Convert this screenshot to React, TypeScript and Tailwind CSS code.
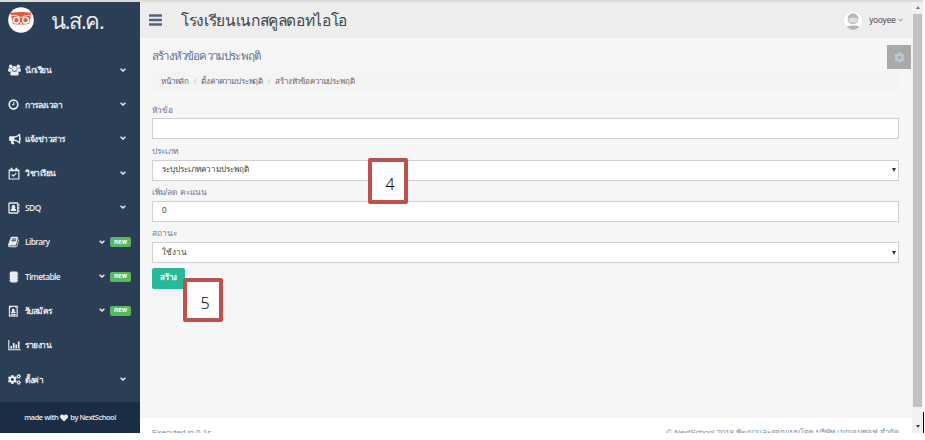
import type { ReactNode } from "react";
import { FaBullhorn, FaCogs, FaCog, FaHeart } from "react-icons/fa";

function UsersIcon() {
  return (
    <svg viewBox="0 0 13 12" className="h-3 w-[13px]" fill="currentColor">
      <circle cx="2.7" cy="2.4" r="1.8" />
      <circle cx="10.3" cy="2.4" r="1.8" />
      <path d="M.2 7.300V5.600q0-1.500 1-1.500 1.500 1 3 .2-.4 1.600.4 2.500-1 .2-1.500.9H.8q-.6 0-.6-.4zM12.800 7.300V5.600q0-1.500-1-1.500-1.500 1-3 .2.400 1.600-.4 2.500 1 .2 1.500.9h2.300q.6 0 .6-.4z" />
      <circle cx="6.500" cy="4.500" r="2.400" />
      <path d="M2.300 10.200q0-3.200 2-3.200 2.200 1.500 4.400 0 2 0 2 3.200 0 1.400-1.400 1.400H3.700q-1.400 0-1.400-1.400z" />
    </svg>
  );
}
function ClockIcon() {
  return (
    <svg viewBox="0 0 12 12" className="-ml-[2px] h-[11px] w-[11px]" fill="none" stroke="currentColor">
      <circle cx="6" cy="6" r="4.7" strokeWidth="1.8" />
      <path d="M6.3 3.2v3.2H4.2" strokeWidth="1.1" />
    </svg>
  );
}
function CalendarIcon() {
  return (
    <svg viewBox="0 0 12 13" className="-ml-px h-[13px] w-[12px]" fill="none" stroke="currentColor">
      <path d="M1.2 3h9.6v9H1.2zM1.2 3.6h9.6" strokeWidth="1.2" />
      <path d="M3.6.8v2.6M8.4.8v2.6" strokeWidth="1.8" />
      <path d="M3.8 7.5l1.6 1.7 2.9-3" strokeWidth="1.1" />
    </svg>
  );
}
function AddressIcon() {
  return (
    <svg viewBox="0 0 12 12" className="-ml-px h-3 w-3" fill="none" stroke="currentColor">
      <rect x="1" y="1" width="8.8" height="10" rx=".6" strokeWidth="1.3" />
      <path d="M11 2v2M11 5v2M11 8v2" strokeWidth="1" />
      <path d="M2.700 9V7.400l1.300-1A1.900 2.100 0 1 1 6.900 6.400l1.300 1V9z" fill="currentColor" stroke="none" />
    </svg>
  );
}
function BookIcon() {
  return (
    <svg viewBox="0 0 1792 1792" className="-ml-px h-3 w-3" fill="currentColor">
      <path d="M1639 478q40 57 18 129l-275 906q-19 64-76.5 107.5t-122.5 43.5h-923q-77 0-148.5-53.5t-99.5-131.5q-24-67-2-127 0-4 3-27t4-37q1-8-3-21.5t-3-19.5q2-11 8-21t16.5-23.5 16.5-23.5q23-38 45-91.5t30-91.5q3-10 .5-30t-.5-28q3-11 17-28t17-23q21-36 42-92t25-90q1-9-2.5-32t.5-28q4-13 22-30.5t22-22.5q19-26 42.5-84.5t27.5-96.5q1-8-3-25.5t-2-26.5q2-8 9-18t18-23 17-21q8-12 16.5-30.5t15-35 16-36 19.5-32 26.5-23.5 36-11.5 47.5 5.5l-1 3q38-9 51-9h761q74 0 114 56t18 130l-274 906q-36 119-71.5 153.5t-128.5 34.5h-869q-27 0-38 15-11 16-1 43 24 70 144 70h923q29 0 56-15.5t35-41.5l300-987q7-22 5-57 38 15 59 43zm-1064 2q-4 13 2 22.5t20 9.5h608q13 0 25.5-9.5t16.5-22.5l21-64q4-13-2-22.5t-20-9.5h-608q-13 0-25.5 9.5t-16.5 22.5zm-83 256q-4 13 2 22.5t20 9.5h608q13 0 25.5-9.5t16.5-22.5l21-64q4-13-2-22.5t-20-9.5h-608q-13 0-25.5 9.5t-16.5 22.5z" />
    </svg>
  );
}
function NotebookIcon() {
  return (
    <svg viewBox="0 0 12 12" className="-ml-[2px] h-3 w-3" fill="currentColor">
      <rect x="2" y=".6" width="7.6" height="10.8" rx="1.4" />
      <path d="M.8 2.5h9.8M.8 4.8h9.8M.8 7.1h9.8M.8 9.4h9.8" stroke="currentColor" strokeWidth=".9" opacity=".5" />
    </svg>
  );
}
function BadgeIcon() {
  return (
    <svg viewBox="0 0 12 13" className="-ml-[2px] h-[12px] w-[11px]" fill="none" stroke="currentColor">
      <rect x="1.6" y="1.4" width="8.4" height="10.6" strokeWidth="1.3" />
      <path d="M1.6 2h2.5M7.6 2H10M3.4 10.4h5" strokeWidth="1.2" />
      <path d="M3.3 9V7.7l1.2-.9a1.6 1.8 0 1 1 2.5 0l1.3.9V9z" fill="currentColor" stroke="none" />
    </svg>
  );
}
function ChartIcon() {
  return (
    <svg viewBox="0 0 13 12" className="h-3 w-[13px]" fill="none" stroke="currentColor">
      <path d="M.8 1v9.8h12" strokeWidth="1.1" />
      <path d="M3.2 9.5V7M5.7 9.5V4M8.2 9.5V5.4M10.7 9.5V2.5" strokeWidth="1.7" />
    </svg>
  );
}
function Chevron() {
  return (
    <svg viewBox="0 0 6 4" className="mb-px h-1 w-1.5" fill="none" stroke="currentColor" strokeWidth="1.5">
      <path d="M.6.7L3 3 5.4.7" />
    </svg>
  );
}

type Item = { icon: ReactNode; label: string; cls: string; arrow?: boolean; isNew?: boolean };
const items: Item[] = [
  { icon: <UsersIcon />, label: "นักเรียน", cls: "tracking-[-0.5px]", arrow: true },
  { icon: <ClockIcon />, label: "การลงเวลา", cls: "tracking-[-0.4px]", arrow: true },
  { icon: <FaBullhorn size={12} />, label: "แจ้งข่าวสาร", cls: "tracking-[-0.5px]", arrow: true },
  { icon: <CalendarIcon />, label: "วิชาเรียน", cls: "tracking-[-0.5px]", arrow: true },
  { icon: <AddressIcon />, label: "SDQ", cls: "tracking-[-0.5px]", arrow: true },
  { icon: <BookIcon />, label: "Library", cls: "tracking-[-0.6px]", arrow: true, isNew: true },
  { icon: <NotebookIcon />, label: "Timetable", cls: "tracking-[-0.6px]", arrow: true, isNew: true },
  { icon: <BadgeIcon />, label: "รับสมัคร", cls: "tracking-[-0.6px]", arrow: true, isNew: true },
  { icon: <ChartIcon />, label: "รายงาน", cls: "tracking-[-0.5px]" },
  { icon: <FaCogs size={13} />, label: "ตั้งค่า", cls: "tracking-[-0.4px]", arrow: true },
];

function Sidebar() {
  return (
    <aside className="flex h-[431px] w-[140px] shrink-0 flex-col bg-[#2c3e55] text-[#e8edf2]">
      <div className="flex h-[51px] shrink-0 items-start pt-[5px] pl-[8px]">
        <svg viewBox="0 0 26 26" className="h-[26px] w-[26px] shrink-0">
          <circle cx="13" cy="13" r="12.8" fill="#fff" />
          <path d="M1.600 5.800Q13 4 23.400 5.800L22.600 9.600 21 17Q13 18.600 5 17L3.400 9.600z" fill="#e9573f" />
          <path d="M2.600 8.200Q9 7.600 13 10.600 17 7.600 22.600 8.200" fill="none" stroke="#fff" strokeWidth=".8" />
          <circle cx="8.400" cy="13.200" r="2.900" fill="#e9573f" stroke="#fff" strokeWidth="1.500" />
          <circle cx="17.600" cy="13.200" r="2.900" fill="#e9573f" stroke="#fff" strokeWidth="1.500" />
          <path d="M11.400 17.500l1.600-2.800 1.600 2.800z" fill="#fff" />
        </svg>
        <div className="ml-[17px] text-[22px] leading-[27px] font-medium tracking-[-1.3px] whitespace-nowrap">น.ส.ค.</div>
      </div>
      <nav className="flex flex-col">
        {items.map((i) => (
          <div key={i.label} className="flex h-[34.4px] items-center pl-[8px]">
            <span className="flex w-[13px] shrink-0 justify-center">{i.icon}</span>
            <span className={"ml-1 grow text-[8.4px] leading-3 font-semibold whitespace-nowrap " + i.cls}>{i.label}</span>
            {i.arrow && <Chevron />}
            {i.isNew ? (
              <span className="mr-[9px] ml-[5px] flex h-[10px] w-[21px] items-center justify-center rounded-[2px] bg-[#5cb85c] pb-px text-[6.2px] leading-none font-bold text-white">new</span>
            ) : (
              <span className="w-[14px]" />
            )}
          </div>
        ))}
      </nav>
      <div className="mt-auto flex h-[31px] shrink-0 items-center justify-center gap-[2px] bg-[#1a2d45] text-[7.4px] font-semibold tracking-[-0.42px] whitespace-nowrap">
        <span>made with</span>
        <FaHeart size={8} />
        <span>by NextSchool</span>
      </div>
    </aside>
  );
}

const label = "text-[8.300px] leading-3 text-[#66759a] whitespace-nowrap font-[Liberation_Sans,sans-serif]";
const field =
  "flex h-[21px] items-center border border-[#d0d0d0] bg-white pl-[9px] text-[8.200px] leading-3 text-[#444] font-[Liberation_Sans,sans-serif] whitespace-nowrap";

function Field({ name, value, select }: { name: string; value: string; select?: boolean }) {
  return (
    <div className="flex h-[41.3px] flex-col">
      <div className={label + " mb-[2.8px]"}>{name}</div>
      <div className={field}>
        <span className="grow">{value}</span>
        {select && <span className="mr-[2px] border-x-[2.5px] border-t-[4px] border-x-transparent border-t-[#333]" />}
      </div>
    </div>
  );
}

export default function App() {
  return (
    <div className="relative h-[440px] w-[925px] overflow-hidden bg-white font-[Open_Sans,sans-serif]">
      <div className="h-[2px] w-[923px] bg-[#dcdcdc]" />
      <div className="flex h-[431px] overflow-hidden">
        <Sidebar />
        <main className="flex w-[772px] shrink-0 flex-col bg-[#f6f6f6]">
          <header className="flex h-[36px] shrink-0 items-center bg-[#ededed] pr-[9px] pl-[9px]">
            <svg viewBox="0 0 13 12" className="h-3 w-[13px]" fill="#4f6480">
              <path d="M0 .3h13v2.400H0zM0 4.800h13v2.400H0zM0 9.300h13v2.400H0z" />
            </svg>
            <h1 className="ml-[19px] grow text-[15.500px] leading-5 font-medium tracking-[-0.35px] whitespace-nowrap text-[#444]">โรงเรียนเนกสคูลดอทไอโอ</h1>
            <svg viewBox="0 0 18 18" className="mt-[2px] h-[18px] w-[18px]">
              <circle cx="9" cy="9" r="9" fill="#fff" />
              <circle cx="9" cy="6.600" r="5.400" fill="#b9b9b9" />
              <path d="M4.500 6.400q4.500-1.600 9 0 0 4.400-4.500 4.400T4.500 6.400z" fill="#dedede" />
              <path d="M2.200 14.800q6.800-2.600 13.600 0Q9 21 2.200 14.800z" fill="#b4b4b4" />
            </svg>
            <span className="ml-[7px] font-[Liberation_Sans,sans-serif] text-[8.5px] tracking-[-0.100px] text-[#444]">yooyee</span>
            <svg viewBox="0 0 6 4" className="ml-[2px] h-[4px] w-[5px]" fill="none" stroke="#666" strokeWidth="1">
              <path d="M.6.7L3 3 5.4.7" />
            </svg>
          </header>
          <div className="flex h-[33px] shrink-0 items-start justify-between">
            <h2 className="mt-[10px] ml-[12px] text-[11.500px] leading-4 font-medium tracking-[-0.830px] whitespace-nowrap text-[#5f7396]">สร้างหัวข้อความประพฤติ</h2>
            <div className="mt-[7px] mr-px flex h-[24px] w-[24px] items-center justify-center bg-[#a9a9a9] text-[#b9c8dc]">
              <FaCog size={11} />
            </div>
          </div>
          <div className="ml-[12px] flex h-[21px] w-[747px] shrink-0 items-center gap-[5px] bg-[#f4f4f4] pl-[9px] font-[Liberation_Sans,sans-serif] text-[8px] tracking-[-0.15px] whitespace-nowrap text-[#5a6680]">
            <span>หน้าหลัก</span>
            <span className="text-[#bbb]">/</span>
            <span>ตั้งค่าความประพฤติ</span>
            <span className="text-[#bbb]">/</span>
            <span className="text-[#666]">สร้างหัวข้อความประพฤติ</span>
          </div>
          <div className="mt-[11.600px] ml-[12px] flex w-[747px] flex-col">
            <Field name="หัวข้อ" value="" />
            <Field name="ประเภท" value="ระบุประเภทความประพฤติ" select />
            <Field name="เพิ่ม/ลด คะแนน" value="0" />
            <Field name="สถานะ" value="ใช้งาน" select />
            <button className="mt-[-1px] h-[21px] w-[33px] rounded-[2px] bg-[#26b99a] font-[Liberation_Sans,sans-serif] text-[8px] leading-3 font-bold whitespace-nowrap text-white">สร้าง</button>
          </div>
          <footer className="mt-auto flex h-[15px] shrink-0 justify-between overflow-hidden bg-white pr-[13px] pl-[12px] font-[Liberation_Sans,sans-serif] text-[8px] leading-3 whitespace-nowrap text-[#73879c]">
            <span className="mt-[9px]">Executed in 0.1s</span>
            <span className="mt-[9px] tracking-[-0.080px]">© NextSchool 2018 พัฒนาและออกแบบโดย บริษัท เนกเจนซอฟ จำกัด</span>
          </footer>
        </main>
        <div className="flex w-[11px] shrink-0 flex-col items-center bg-[#f1f1f1]">
          <span className="mt-[4px] border-x-[2.5px] border-b-[3px] border-x-transparent border-b-[#777]" />
          <div className="mt-[5px] h-[393px] w-[9px] bg-[#c1c1c1]" />
          <span className="mt-[18px] border-x-[2.5px] border-t-[3px] border-x-transparent border-t-[#444]" />
        </div>
        <div className="mt-[410px] h-[21px] w-px bg-black" />
      </div>
      <div className="absolute top-[158px] left-[368px] flex h-[46px] w-[40px] items-center justify-center rounded-[2px] border-4 border-[#c0504d] bg-white pt-[5px] pl-1 font-[Noto_Sans,sans-serif] text-[16px] font-light text-black">4</div>
      <div className="absolute top-[278px] left-[183px] flex h-[44px] w-[40px] items-center justify-center rounded-[2px] border-4 border-[#c0504d] bg-white pt-[5px] pl-1 font-[Noto_Sans,sans-serif] text-[16px] font-light text-black">5</div>
    </div>
  );
}
